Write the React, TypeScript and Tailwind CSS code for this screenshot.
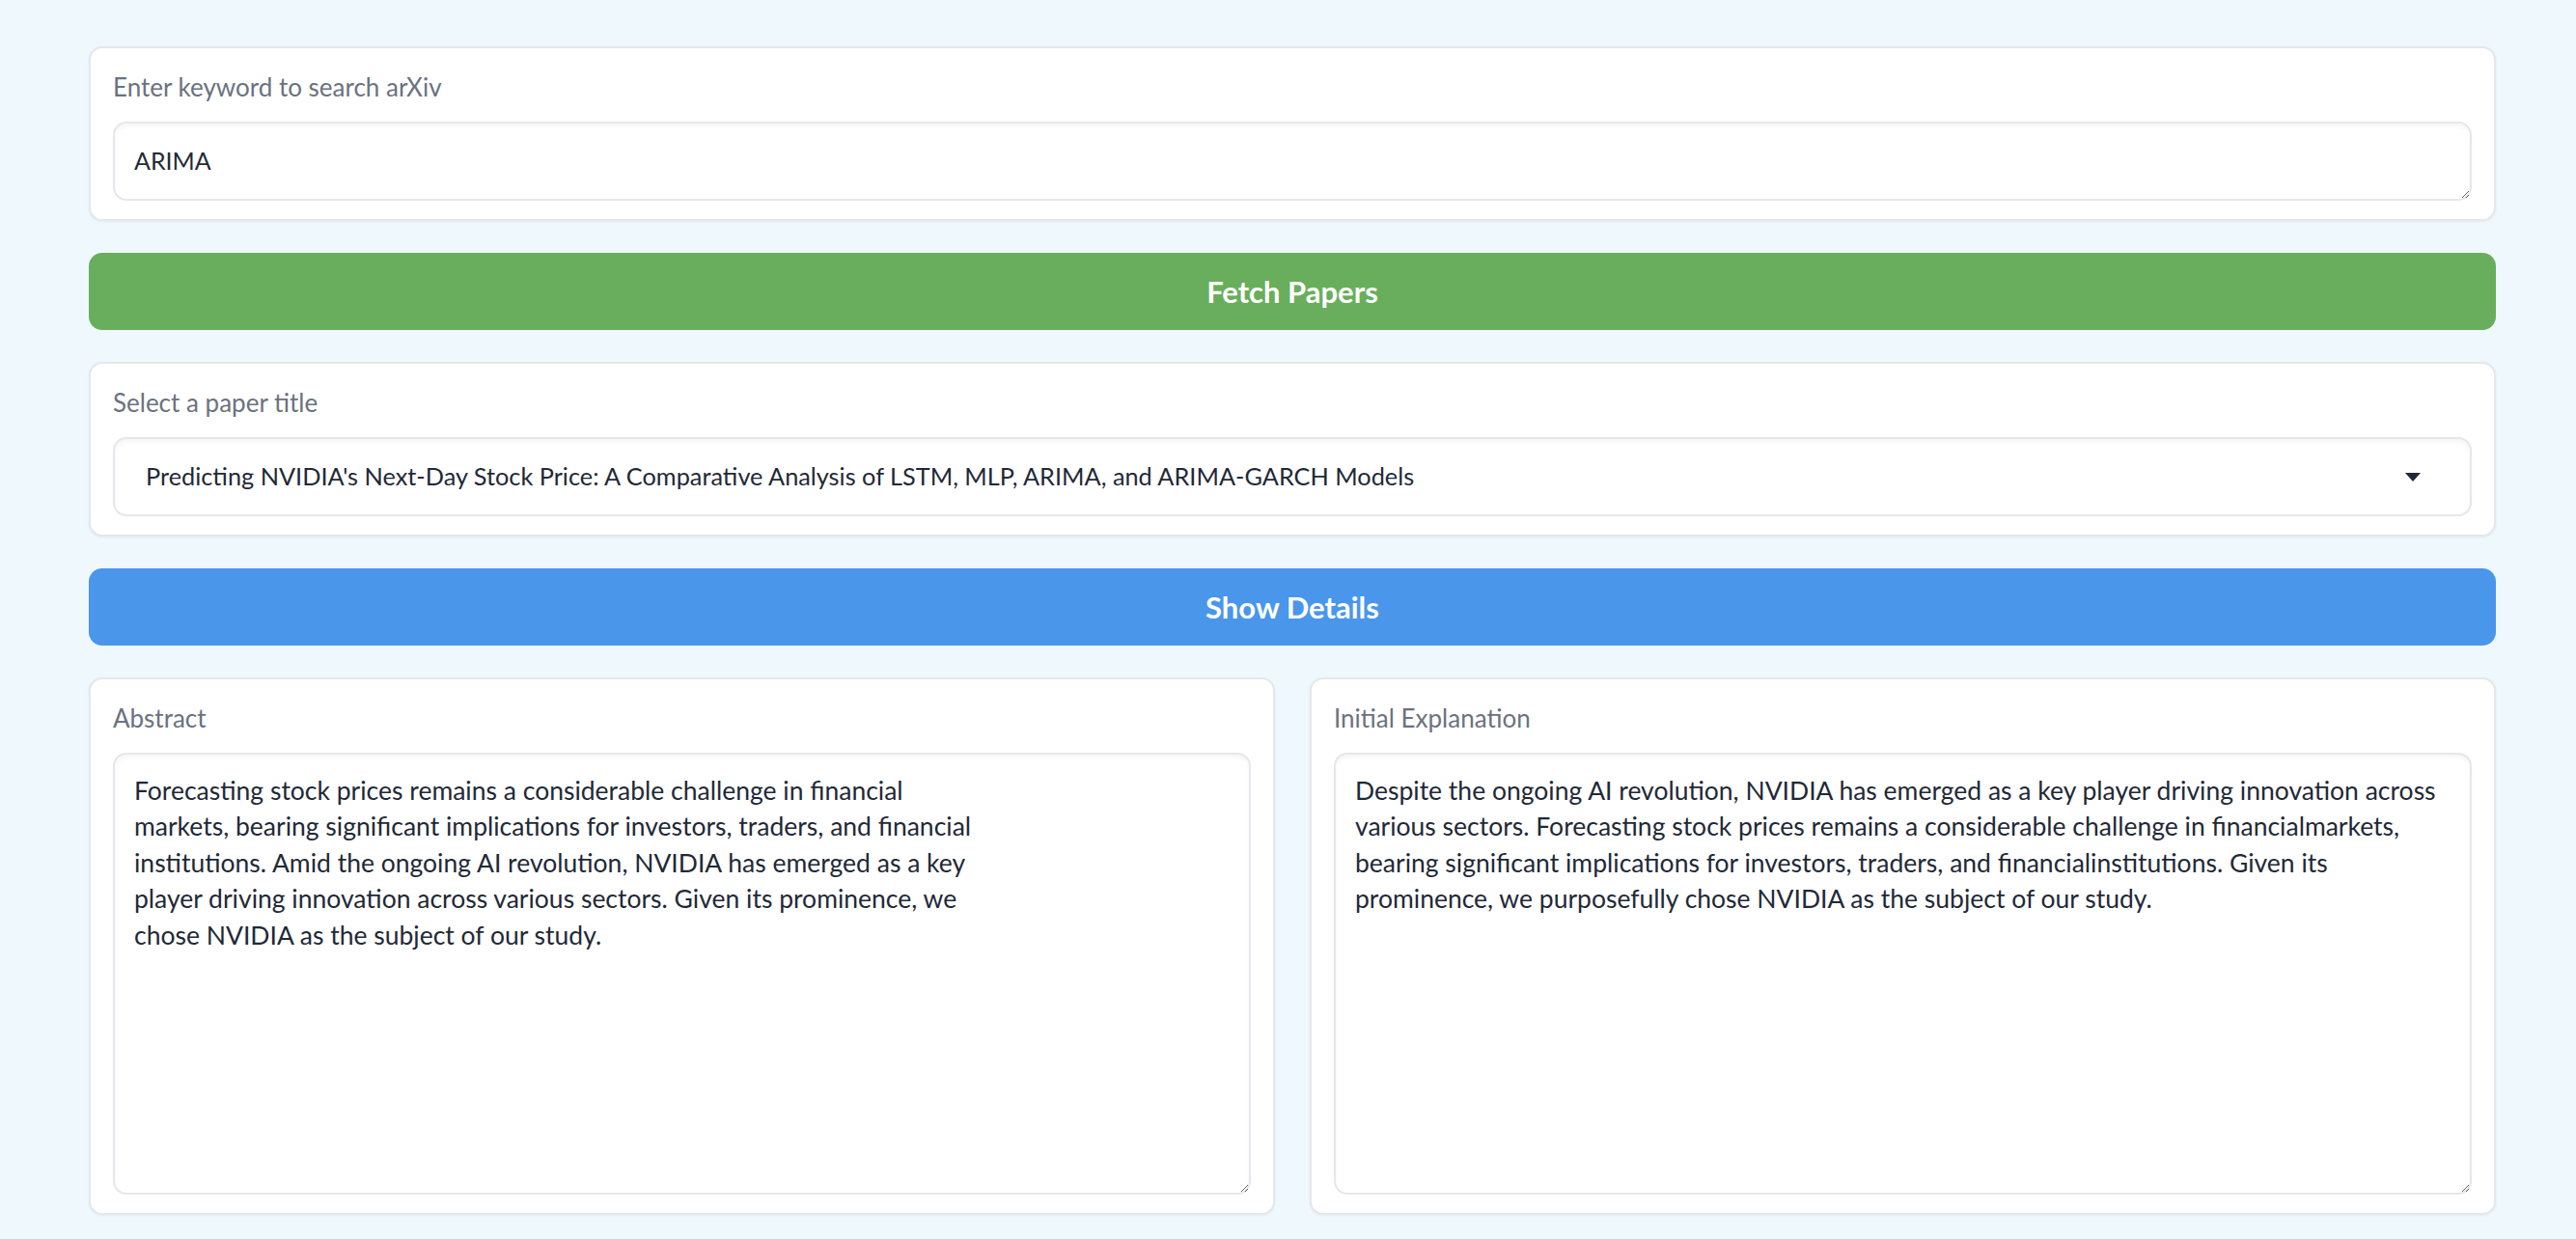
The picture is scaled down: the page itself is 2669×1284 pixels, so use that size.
import React, { useState } from 'react';

const abstractText = `Forecasting stock prices remains a considerable challenge in financial
markets, bearing significant implications for investors, traders, and financial
institutions. Amid the ongoing AI revolution, NVIDIA has emerged as a key
player driving innovation across various sectors. Given its prominence, we
chose NVIDIA as the subject of our study.`;

const explanationText =
  'Despite the ongoing AI revolution, NVIDIA has emerged as a key player driving innovation across various sectors. Forecasting stock prices remains a considerable challenge in financialmarkets, bearing significant implications for investors, traders, and financialinstitutions. Given its prominence, we purposefully chose NVIDIA as the subject of our study.';

const font = { fontFamily: 'Lato, "Open Sans", sans-serif' };

const Card = ({ label, children }: { label: string; children: React.ReactNode }) => (
  <div className="rounded-[14px] border-2 border-[#e6e7eb] bg-white px-[23px] pt-[24px] pb-[19px] shadow-[0_1px_3px_rgba(0,0,0,0.05)]">
    <div className="text-[26px] leading-[32px] text-[#6b7280] mb-[20px]">{label}</div>
    {children}
  </div>
);

const fieldClass =
  'block w-full rounded-[14px] border-2 border-[#e6e7eb] bg-white px-[20px] text-[#1f2937] shadow-[inset_0_3px_5px_rgba(0,0,0,0.04)] outline-none';

const App = () => {
  const [keyword, setKeyword] = useState('ARIMA');

  return (
    <div className="min-h-screen bg-[#eef8fd] pl-[92px] pr-[83px] pt-[48px] pb-[40px] flex flex-col gap-[33px]" style={font}>
      <Card label="Enter keyword to search arXiv">
        <textarea
          className={`${fieldClass} h-[82px] py-[20px] text-[25px] leading-[37px]`}
          style={font}
          value={keyword}
          onChange={(e) => setKeyword(e.target.value)}
        />
      </Card>

      <button className="h-[80px] w-full rounded-[14px] bg-[#69ae5c] text-[31px] font-bold text-white">
        Fetch Papers
      </button>

      <Card label="Select a paper title">
        <div className="flex h-[82px] items-center justify-between rounded-[14px] border-2 border-[#e6e7eb] bg-white pl-[32px] pr-[51px] shadow-[inset_0_3px_5px_rgba(0,0,0,0.04)]">
          <span className="text-[25.3px] text-[#1f2937]">
            Predicting NVIDIA's Next-Day Stock Price: A Comparative Analysis of LSTM, MLP, ARIMA, and ARIMA-GARCH Models
          </span>
          <svg width="16" height="9" viewBox="0 0 16 9">
            <path d="M0 0 L16 0 L8 9 Z" fill="#1f2937" />
          </svg>
        </div>
      </Card>

      <button className="h-[80px] w-full rounded-[14px] bg-[#4a96eb] text-[31px] font-bold text-white">
        Show Details
      </button>

      <div className="grid grid-cols-2 gap-[36px]">
        <Card label="Abstract">
          <textarea
            className={`${fieldClass} h-[458px] pt-[19px] pb-[20px] text-[26.5px] leading-[37.4px]`}
            style={font}
            readOnly
            value={abstractText}
          />
        </Card>
        <Card label="Initial Explanation">
          <textarea
            className={`${fieldClass} h-[458px] pt-[19px] pb-[20px] text-[26.5px] leading-[37.4px]`}
            style={font}
            readOnly
            value={explanationText}
          />
        </Card>
      </div>
    </div>
  );
};

export default App;
